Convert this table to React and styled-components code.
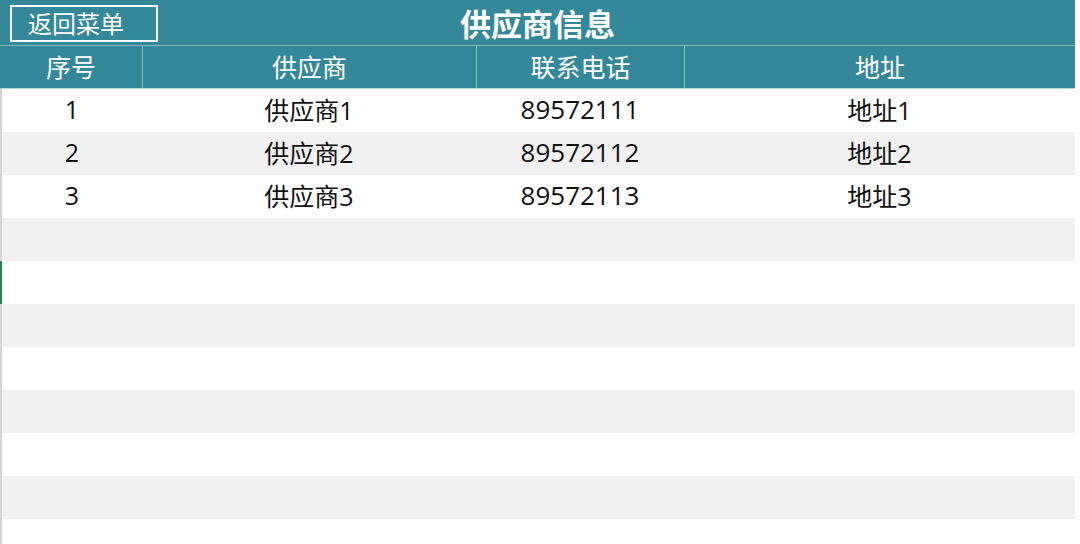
import React from "react";
import styled, { createGlobalStyle } from "styled-components";

const Global = createGlobalStyle`
    html, body { margin: 0; padding: 0; background: #ffffff; }
    body { font-family: "Open Sans", "Noto Sans CJK SC", sans-serif; }
`;

const Sheet = styled.div`
    width: 1075px;
    height: 544px;
    overflow: hidden;
    background: #ffffff;
`;

const TitleBar = styled.div`
    position: relative;
    height: 45px;
    background: #35889a;
    border-bottom: 1px solid #85b9c4;
    display: flex;
    align-items: center;
    justify-content: center;
`;

const BackButton = styled.button`
    position: absolute;
    left: 10px;
    top: 5px;
    width: 148px;
    height: 37px;
    box-sizing: border-box;
    border: 2px solid #ffffff;
    background: transparent;
    color: #ffffff;
    font-family: "Noto Sans CJK SC", sans-serif;
    font-size: 24px;
    text-align: left;
    padding: 0 0 2px 16px;
    line-height: 31px;
`;

const Title = styled.h1`
    margin: 0;
    color: #ffffff;
    font-family: "Noto Sans CJK SC", sans-serif;
    font-size: 31px;
    font-weight: 700;
    line-height: 45px;
`;

const HeadRow = styled.div`
    display: grid;
    grid-template-columns: 142px 334px 208px 391px;
    height: 42px;
    background: #35889a;
    border-bottom: 1px solid #b7d4da;
`;

const HeadCell = styled.div`
    display: flex;
    align-items: center;
    justify-content: center;
    color: #ffffff;
    font-family: "Noto Sans CJK SC", sans-serif;
    font-size: 25px;
    padding-bottom: 2px;
    border-left: ${p => (p.first ? "none" : "1px solid #8ebfca")};
`;

const Body = styled.div`
    border-left: 2px solid #d4d4d4;
`;

const Row = styled.div`
    display: grid;
    grid-template-columns: 140px 334px 208px 391px;
    height: 43px;
    background: ${p => (p.shade ? "#f1f1f1" : "#ffffff")};
    box-shadow: ${p => (p.active ? "-2px 0 0 #1e8a50" : "none")};
`;

const Cell = styled.div`
    display: flex;
    align-items: center;
    justify-content: center;
    padding-bottom: 4px;
    color: #111111;
    font-family: "Open Sans", "Noto Sans CJK SC", sans-serif;
    font-size: ${p => (p.num ? "26px" : "25px")};
`;

const suppliers = [
    { id: 1, name: "供应商1", phone: "89572111", addr: "地址1" },
    { id: 2, name: "供应商2", phone: "89572112", addr: "地址2" },
    { id: 3, name: "供应商3", phone: "89572113", addr: "地址3" },
];

export default function App() {
    const rows = [];
    for (let i = 0; i < 11; i++) {
        const s = suppliers[i];
        rows.push(
            <Row key={i} shade={i % 2 === 1} active={i === 4}>
                <Cell>{s ? s.id : ""}</Cell>
                <Cell>{s ? s.name : ""}</Cell>
                <Cell num>{s ? s.phone : ""}</Cell>
                <Cell>{s ? s.addr : ""}</Cell>
            </Row>
        );
    }
    return (
        <Sheet>
            <Global />
            <TitleBar>
                <BackButton>返回菜单</BackButton>
                <Title>供应商信息</Title>
            </TitleBar>
            <HeadRow>
                <HeadCell first>序号</HeadCell>
                <HeadCell>供应商</HeadCell>
                <HeadCell>联系电话</HeadCell>
                <HeadCell>地址</HeadCell>
            </HeadRow>
            <Body>{rows}</Body>
        </Sheet>
    );
}
